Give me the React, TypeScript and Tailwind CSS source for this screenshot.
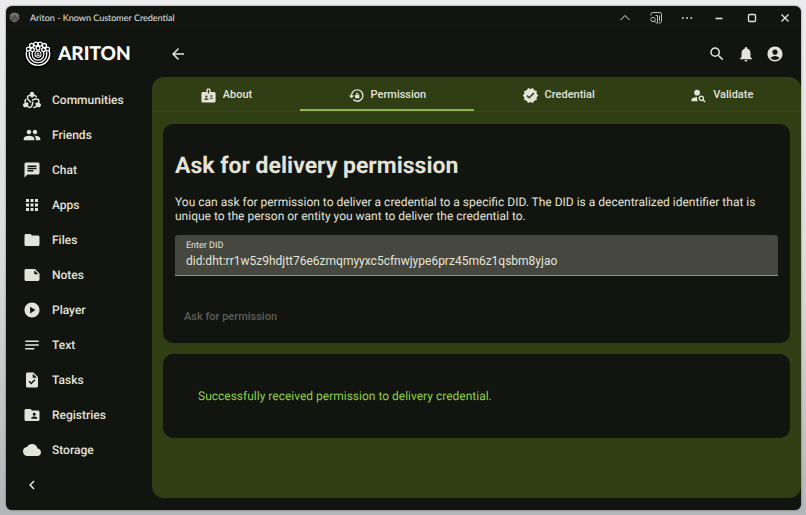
import { useState } from "react";
import type { ReactNode } from "react";
import type { IconType } from "react-icons";
import {
  MdAccountCircle,
  MdApps,
  MdArrowBack,
  MdBadge,
  MdChat,
  MdChevronLeft,
  MdCloud,
  MdDiversity2,
  MdFolder,
  MdFolderShared,
  MdGroup,
  MdLockReset,
  MdNote,
  MdNotes,
  MdNotifications,
  MdPersonSearch,
  MdPlayCircle,
  MdSearch,
  MdTask,
  MdVerified,
} from "react-icons/md";

function Emblem({ className }: { className: string }) {
  return (
    <svg viewBox="0 0 48 48" className={className} fill="none" stroke="#ffffff" aria-hidden="true">
      <circle cx="24" cy="24" r="24" fill="#000000" stroke="none" />
      <path d="M4.500 19a20 20 0 1 0 39 0" strokeWidth="2.400" />
      <path d="M9.500 20.500a14.900 14.900 0 1 0 29 0" strokeWidth="2.400" />
      <path d="M15 19.500a10.200 10.200 0 1 0 18 0" strokeWidth="2.200" />
      <circle cx="24" cy="24.500" r="5.200" strokeWidth="1.800" />
      <path d="m21.500 26.500 2.500-4.500 2.500 4.500z" strokeWidth="1.400" />
      <g strokeWidth="2.200">
        <circle cx="13" cy="9.500" r="3.500" />
        <circle cx="20.300" cy="7" r="3.500" />
        <circle cx="27.700" cy="7" r="3.500" />
        <circle cx="35" cy="9.500" r="3.500" />
        <circle cx="7.500" cy="15.500" r="3.300" />
        <circle cx="14.500" cy="16.500" r="3.200" />
        <circle cx="24" cy="14" r="3.300" />
        <circle cx="33.500" cy="16.500" r="3.200" />
        <circle cx="40.500" cy="15.500" r="3.300" />
      </g>
    </svg>
  );
}

const navItems: { label: string; icon: IconType }[] = [
  { label: "Communities", icon: MdDiversity2 },
  { label: "Friends", icon: MdGroup },
  { label: "Chat", icon: MdChat },
  { label: "Apps", icon: MdApps },
  { label: "Files", icon: MdFolder },
  { label: "Notes", icon: MdNote },
  { label: "Player", icon: MdPlayCircle },
  { label: "Text", icon: MdNotes },
  { label: "Tasks", icon: MdTask },
  { label: "Registries", icon: MdFolderShared },
  { label: "Storage", icon: MdCloud },
];

const tabs: { label: string; icon: IconType }[] = [
  { label: "About", icon: MdBadge },
  { label: "Permission", icon: MdLockReset },
  { label: "Credential", icon: MdVerified },
  { label: "Validate", icon: MdPersonSearch },
];

function WindowButton({ label, wide = false, children }: { label: string; wide?: boolean; children: ReactNode }) {
  return (
    <button
      type="button"
      aria-label={label}
      className={wide ? "flex w-[33px] justify-center" : "flex w-[31px] justify-center"}
    >
      <svg viewBox="0 0 14 14" className="size-[14px]" fill="none" stroke="currentColor" aria-hidden="true">
        {children}
      </svg>
    </button>
  );
}

function TitleBar() {
  return (
    <header className="flex h-6 items-center border-b border-[#0c0e09] pl-[3px] text-[#e6e6e0]">
      <Emblem className="size-[11px] opacity-80" />
      <span className="ml-[10px] grow font-['Lato',sans-serif] text-[9px]">
        Ariton - Known Customer Credential
      </span>
      <div className="flex">
        <WindowButton label="Collapse">
          <path d="m2.500 9 4.500-4.500L11.500 9" />
        </WindowButton>
        <WindowButton label="Search page">
          <g opacity="0.8">
            <path d="M2 4.500V3.200Q2 1.500 3.700 1.500h7.100q1.700 0 1.700 1.700v7.100q0 1.700-1.700 1.700H9.500M6.500 4.500h2V12M10.500 4.500V10" />
            <circle cx="4" cy="8.500" r="2.200" />
            <path d="m5.600 10.100 2.400 2.600" />
          </g>
        </WindowButton>
        <WindowButton label="More">
          <path d="M2 7h1.700M6.200 7h1.700M10.400 7h1.700" strokeWidth="1.700" />
        </WindowButton>
        <WindowButton label="Minimize" wide>
          <path d="M3.500 7.500h7" strokeWidth="1.300" />
        </WindowButton>
        <WindowButton label="Maximize" wide>
          <rect x="3.500" y="3.500" width="7" height="7" rx="1" strokeWidth="1.300" />
        </WindowButton>
        <WindowButton label="Close" wide>
          <path d="m3.500 3.500 7 7m0-7-7 7" strokeWidth="1.300" />
        </WindowButton>
      </div>
    </header>
  );
}

function Sidebar() {
  return (
    <aside className="flex w-[146px] shrink-0 flex-col">
      <div className="flex h-[47px] items-center gap-[6px] pl-[18px]">
        <Emblem className="size-7" />
        <span className="font-['Lato',sans-serif] text-[19px] leading-6 font-black text-white">ARITON</span>
      </div>
      <nav className="flex flex-col pt-[5px]">
        {navItems.map(({ label, icon: Icon }) => (
          <a key={label} href="#" className="flex h-[35px] items-center gap-[11px] pl-4 text-xs font-medium">
            <span className="flex w-[19px] justify-center text-[#e3e3d9]">
              <Icon className="size-[18px]" />
            </span>
            {label}
          </a>
        ))}
        <button type="button" aria-label="Collapse menu" className="flex h-[35px] items-center pl-4">
          <span className="flex w-[19px] justify-center">
            <MdChevronLeft className="size-[18px]" />
          </span>
        </button>
      </nav>
    </aside>
  );
}

function Toolbar() {
  return (
    <div className="flex h-[47px] items-center pr-[17px] pl-[17px]">
      <button type="button" aria-label="Back" className="grow">
        <MdArrowBack className="size-[18px]" />
      </button>
      <div className="flex gap-[11px]">
        <button type="button" aria-label="Search">
          <MdSearch className="size-[18px]" />
        </button>
        <button type="button" aria-label="Notifications">
          <MdNotifications className="size-[18px]" />
        </button>
        <button type="button" aria-label="Account">
          <MdAccountCircle className="size-[18px]" />
        </button>
      </div>
    </div>
  );
}

export default function App() {
  const [active, setActive] = useState("Permission");
  const [did, setDid] = useState("did:dht:rr1w5z9hdjtt76e6zmqmyyxc5cfnwjype6prz45m6z1qsbm8yjao");

  return (
    <div className="flex min-h-screen flex-col bg-linear-to-b from-[#ececee] via-[#dcdcde] to-[#b4b5b8] pt-[6px] pr-[5px] pb-[5px] pl-[6px] font-['Roboto',sans-serif] text-[#e3e3d9] [text-rendering:geometricPrecision]">
      <div className="flex grow flex-col overflow-hidden rounded-md bg-[#12140f] shadow-[0_0_2px_#00000099]">
        <TitleBar />
        <div className="flex grow">
          <Sidebar />
          <div className="flex min-w-0 grow flex-col pb-3">
            <Toolbar />
            <main className="grow overflow-hidden rounded-xl bg-[#2f3f13]">
              <div role="tablist" className="flex h-[35px] border-b border-[#3a4822]">
                {tabs.map(({ label, icon: Icon }) => (
                  <button
                    key={label}
                    type="button"
                    role="tab"
                    aria-selected={active === label}
                    onClick={() => setActive(label)}
                    className={
                      active === label
                        ? "flex grow items-center justify-center gap-[6px] border-b-2 border-[#8fb550] pt-1 text-[11px] font-medium"
                        : "flex grow items-center justify-center gap-[6px] border-b-2 border-transparent pt-1 text-[11px] font-medium"
                    }
                  >
                    <Icon className="size-[17px]" />
                    {label}
                  </button>
                ))}
              </div>

              <div className="flex flex-col gap-[11px] py-3 pr-[11px] pl-[11px]">
                <section className="rounded-[10px] bg-[#12140f] px-3 pt-7 pb-3">
                  <h1 className="text-[23px] leading-7 font-bold">Ask for delivery permission</h1>
                  <p className="mt-[15px] text-xs leading-[14px]">
                    You can ask for permission to deliver a credential to a specific DID. The DID is a decentralized
                    identifier that is unique to the person or entity you want to deliver the credential to.
                  </p>
                  <div className="mt-3 flex h-[41px] flex-col rounded-t-[3px] border-b border-[#8f9285] bg-[#46483f] px-[11px] pt-[5px]">
                    <label htmlFor="did" className="text-[9px] leading-3">
                      Enter DID
                    </label>
                    <input
                      id="did"
                      value={did}
                      onChange={(event) => setDid(event.target.value)}
                      className="h-[18px] w-full bg-transparent text-xs outline-none"
                    />
                  </div>
                  <button
                    type="button"
                    disabled
                    className="mt-[27px] flex h-7 items-center px-[9px] text-[11px] font-medium text-[#5c5e57]"
                  >
                    Ask for permission
                  </button>
                </section>

                <section className="rounded-[10px] bg-[#12140f] px-[35px] py-[35px]">
                  <p role="status" className="text-xs leading-[14px] text-[#8fd04a]">
                    Successfully received permission to delivery credential.
                  </p>
                </section>
              </div>
            </main>
          </div>
        </div>
      </div>
    </div>
  );
}
